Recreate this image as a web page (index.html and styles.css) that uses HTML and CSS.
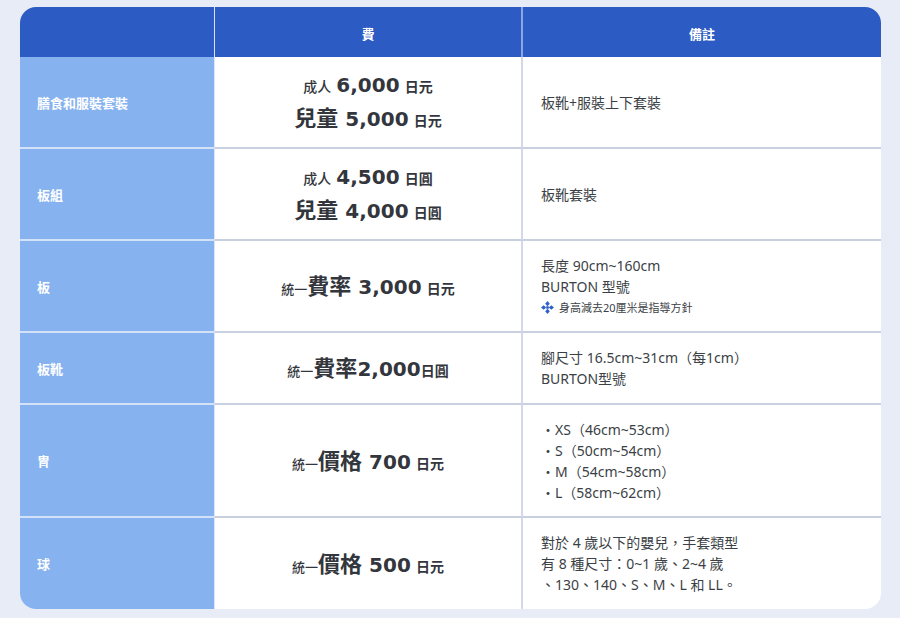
FILE: index.html
```html
<!DOCTYPE html>
<html lang="zh-Hant">
<head>
<meta charset="utf-8">
<title>租賃費用</title>
<link rel="stylesheet" href="styles.css">
</head>
<body>
<div class="card">
<table class="price">
<colgroup><col class="c1"><col class="c2"><col class="c3"></colgroup>
<thead>
<tr class="hd"><th class="blank"></th><th class="mid">費</th><th>備註</th></tr>
</thead>
<tbody>
<tr class="r1">
<th class="label">膳食和服裝套裝</th>
<td class="fee">
<div class="line"><span class="sm">成人</span> <span class="big">6,000</span> <span class="unit">日元</span></div>
<div class="line"><span class="big"><span class="cj">兒童</span> 5,000</span> <span class="unit">日元</span></div>
</td>
<td class="note">板靴+服裝上下套裝</td>
</tr>
<tr class="r2">
<th class="label">板組</th>
<td class="fee">
<div class="line"><span class="sm">成人</span> <span class="big">4,500</span> <span class="unit">日圓</span></div>
<div class="line"><span class="big"><span class="cj">兒童</span> 4,000</span> <span class="unit">日圓</span></div>
</td>
<td class="note">板靴套裝</td>
</tr>
<tr class="r3">
<th class="label">板</th>
<td class="fee">
<div class="line"><span class="sm">統一</span><span class="big"><span class="cj">費率</span> 3,000</span> <span class="unit">日元</span></div>
</td>
<td class="note">
<div>長度 90cm~160cm</div>
<div>BURTON 型號</div>
<div class="tip"><svg class="ico" viewBox="0 0 13 13" width="13" height="13"><path d="M6.5 0 L8.8 2.7 L6.5 5.2 L4.2 2.7Z M6.5 13 L8.8 10.3 L6.5 7.8 L4.2 10.3Z M0 6.5 L2.7 4.2 L5.2 6.5 L2.7 8.8Z M13 6.5 L10.3 4.2 L7.8 6.5 L10.3 8.8Z M5.2 5.2 H7.8 V7.8 H5.2Z" fill="#2f62c8"/></svg><span>身高減去20厘米是指導方針</span></div>
</td>
</tr>
<tr class="r4">
<th class="label">板靴</th>
<td class="fee">
<div class="line"><span class="sm">統一</span><span class="big"><span class="cj">費率</span>2,000</span><span class="unit">日圓</span></div>
</td>
<td class="note">
<div>腳尺寸 16.5cm~31cm（每1cm）</div>
<div>BURTON型號</div>
</td>
</tr>
<tr class="r5">
<th class="label">冑</th>
<td class="fee">
<div class="line"><span class="sm">統一</span><span class="big"><span class="cj">價格</span> 700</span> <span class="unit">日元</span></div>
</td>
<td class="note">
<div>・XS（46cm~53cm）</div>
<div>・S（50cm~54cm）</div>
<div>・M（54cm~58cm）</div>
<div>・L（58cm~62cm）</div>
</td>
</tr>
<tr class="r6">
<th class="label">球</th>
<td class="fee">
<div class="line"><span class="sm">統一</span><span class="big"><span class="cj">價格</span> 500</span> <span class="unit">日元</span></div>
</td>
<td class="note">
<div>對於 4 歲以下的嬰兒，手套類型</div>
<div>有 8 種尺寸：0~1 歲、2~4 歲</div>
<div>、130、140、S、M、L 和 LL。</div>
</td>
</tr>
</tbody>
</table>
</div>
</body>
</html>
```
FILE: styles.css
```css
html, body {
  margin: 0;
  padding: 0;
  background: #e8ecf7;
}
body {
  padding: 7px 19px 0 20px;
  font-family: "Noto Sans", "Noto Sans CJK TC", sans-serif;
  color: #33373e;
}
.card {
  width: 861px;
  border-radius: 16px;
  overflow: hidden;
  background: #ffffff;
}
.price {
  width: 861px;
  border-collapse: separate;
  border-spacing: 0;
  table-layout: fixed;
}
.c1 { width: 194px; }
.c2 { width: 309px; }
.c3 { width: 358px; }
.price th, .price td {
  padding: 0;
  box-sizing: border-box;
}
.hd { height: 50px; }
.hd th {
  background: #2b5bc3;
  color: #ffffff;
  font-size: 13px;
  font-weight: 700;
  text-align: center;
  padding-top: 2px;
}
.hd th.mid {
  border-left: 1px solid #d9e2f5;
  border-right: 2px solid #8ca6df;
}
.r1 { height: 92px; }
.r2 { height: 92px; }
.r3 { height: 92px; }
.r4 { height: 72px; }
.r5 { height: 113px; }
.r6 { height: 91px; }
.label {
  background: #86b2ef;
  color: #ffffff;
  font-size: 13px;
  font-weight: 700;
  text-align: left;
  padding-left: 17px !important;
  border-bottom: 2px solid #d3e1f9;
}
.fee {
  text-align: center;
  font-family: "DejaVu Sans", "Noto Sans CJK TC", sans-serif;
  color: #33363c;
  border-left: 1px solid #dce4f6;
  border-right: 2px solid #d2d8e8;
  border-bottom: 2px solid #c9cfdf;
  padding-bottom: 3px !important;
}
.note {
  font-size: 14px;
  line-height: 21px;
  color: #3b3f46;
  padding-left: 18px !important;
  border-bottom: 2px solid #c9cfdf;
}
.r6 .label, .r6 .fee, .r6 .note { border-bottom: none; }
.line {
  height: 31px;
  line-height: 31px;
  white-space: nowrap;
}
.sm {
  font-family: "Noto Sans CJK TC", sans-serif;
  font-size: 14px;
  font-weight: 500;
}
.r3 .sm, .r4 .sm, .r5 .sm, .r6 .sm { font-size: 13px; }
.big {
  font-size: 20px;
  font-weight: 700;
}
.cj {
  font-family: "Noto Sans CJK TC", sans-serif;
  font-size: 22px;
}
.unit {
  font-family: "Noto Sans CJK TC", sans-serif;
  font-size: 14px;
  font-weight: 700;
}
.tip {
  display: flex;
  align-items: center;
  gap: 5px;
  font-size: 11px;
  line-height: 21px;
}
.ico { display: block; }
```
